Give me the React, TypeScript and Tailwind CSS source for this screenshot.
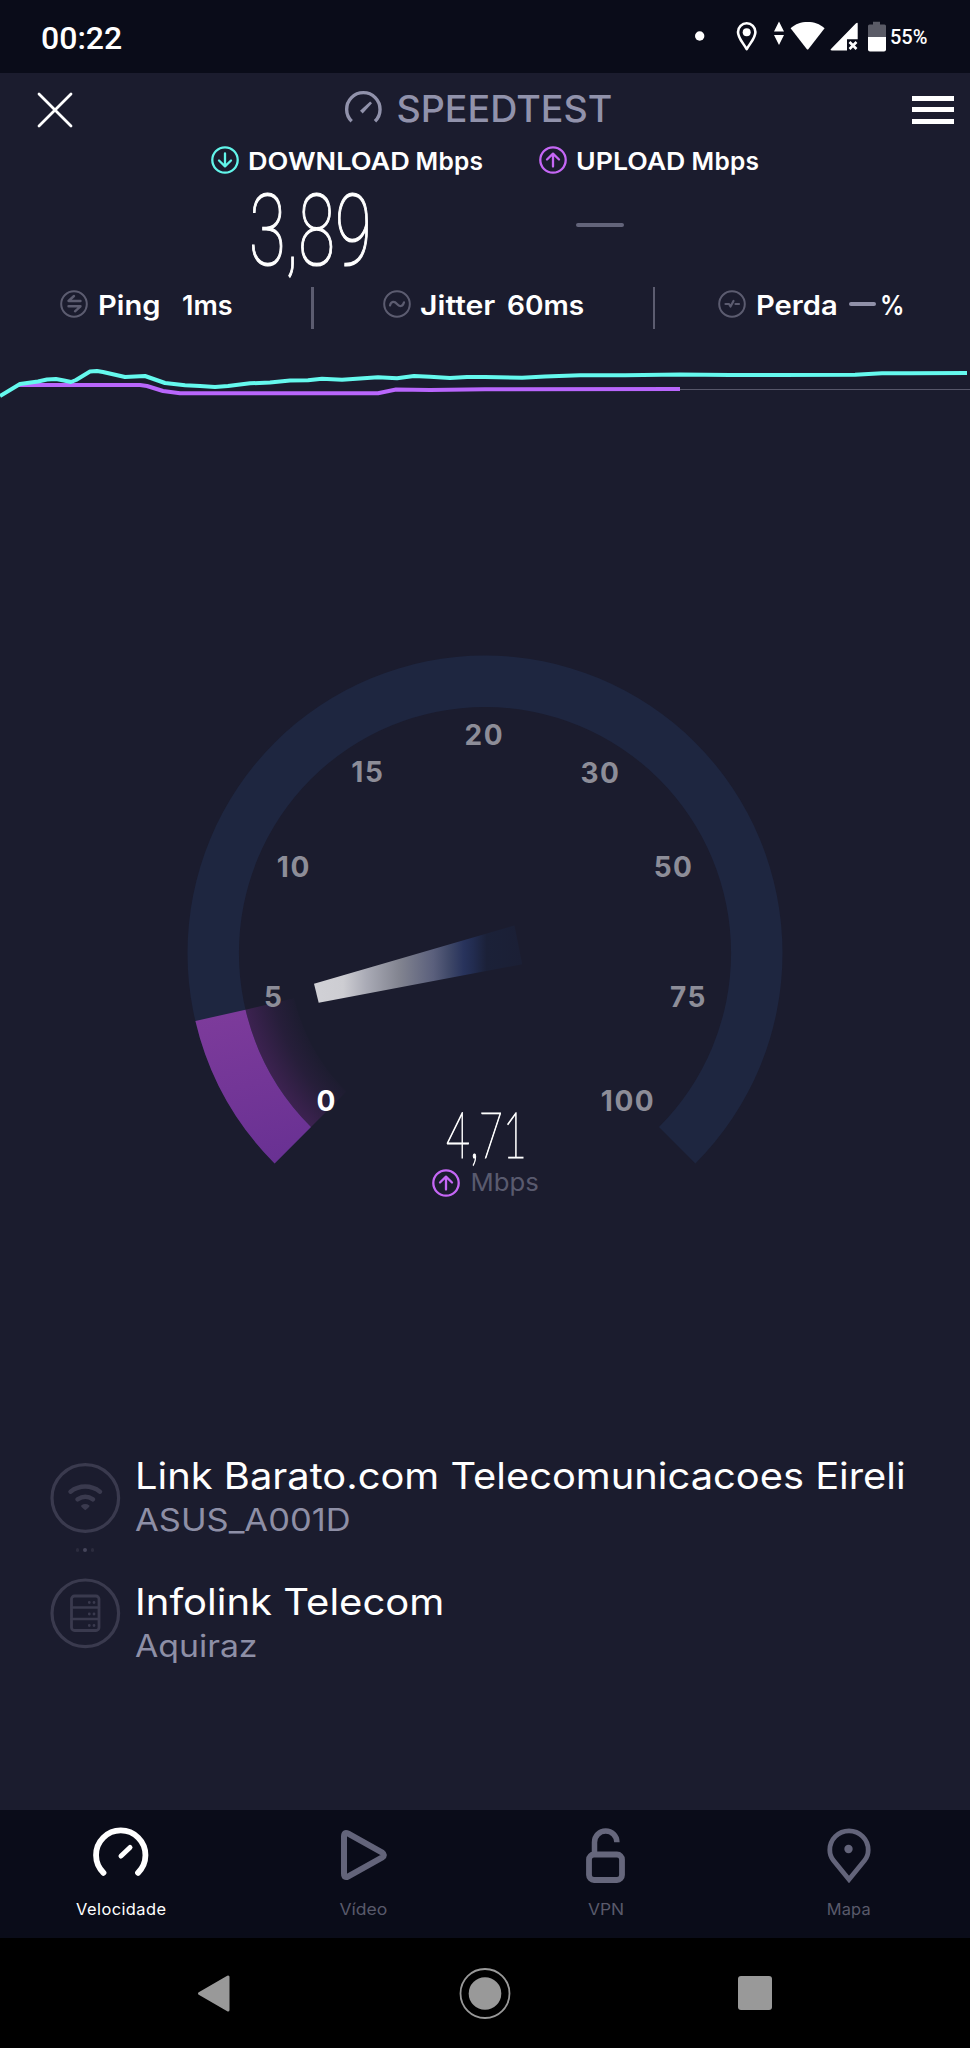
import { ReactNode } from "react";
import clsx from "clsx";

interface IconProps {
  box: string;
  className: string;
  children: ReactNode;
}

interface Tick {
  label: string;
  x: number;
  y: number;
  active?: boolean;
}

const ticks: Tick[] = [
  { label: "0", x: 326.6, y: 470.5, active: true },
  { label: "5", x: 273.6, y: 366.5 },
  { label: "10", x: 293.8, y: 237 },
  { label: "15", x: 367.8, y: 142 },
  { label: "20", x: 484.3, y: 105 },
  { label: "30", x: 600.4, y: 143 },
  { label: "50", x: 673.6, y: 237 },
  { label: "75", x: 688.4, y: 366.5 },
  { label: "100", x: 628, y: 470.5 },
];

const downloadLine =
  "0,56 20,44 38,41.5 47,39.5 56,39 64,40.5 71,42 76,40 90,31.5 97,31 103,32 125,37 145,36 165,43 185,45.3 200,46 215,47 228,46 250,43.3 270,42.5 290,40.5 308,40.3 322,38.7 342,39.8 378,37.3 397,38.3 414,36 430,36.8 450,38 467,37 485,37 522,37.8 545,36.5 580,35.3 625,35.3 680,34.5 730,35 780,35 855,34.7 882,33.3 910,33.3 967,33";
const uploadLine = "18,45 140,45 147,46 163,51 180,53.3 378,53.3 396,49.5 430,50 485,49.3 680,49";

function Icon({ box, className, children }: IconProps) {
  return (
    <svg
      viewBox={box}
      className={clsx("shrink-0 overflow-visible", className)}
      fill="none"
      stroke="currentColor"
      strokeLinecap="round"
      strokeLinejoin="round"
    >
      {children}
    </svg>
  );
}

function ArrowBadge({ up, className }: { up?: boolean; className: string }) {
  return (
    <Icon box="0 0 28 28" className={clsx("size-7", className)}>
      <circle cx="14" cy="14" r="12.700" strokeWidth="2.300" />
      <path d={up ? "M14 20.5V8M8 13.5 14 7.7l6 5.8" : "M14 7.5V20M8 14.5l6 5.8 6-5.8"} strokeWidth="2.300" />
    </Icon>
  );
}

function StatusBar() {
  return (
    <div className="flex h-[73px] items-start bg-[#0a0c19] pt-[21px] pl-[41px] font-['Roboto',sans-serif] font-medium">
      <span className="w-[654px] pt-[1px] text-[32px] leading-none">00:22</span>
      <Icon box="0 0 10 32" className="h-8 w-2.5">
        <circle cx="4.7" cy="15" r="4.7" fill="currentColor" stroke="none" />
      </Icon>
      <Icon box="0 0 22 32" className="ml-[31px] h-8 w-[22px]">
        <path d="M10.7 28.2C7 21.5 2 17.2 2 11a8.7 8.7 0 0 1 17.4 0c0 6.2-5 10.500-8.700 17.200Z" strokeWidth="2.6" />
        <circle cx="10.7" cy="11.2" r="4" fill="currentColor" stroke="none" />
      </Icon>
      <Icon box="0 0 10 32" className="ml-[16px] h-8 w-2.5">
        <path d="M5 .5 10 10.500H0ZM0 14h10L5 24Z" fill="currentColor" stroke="none" />
      </Icon>
      <Icon box="0 0 36 32" className="ml-[6px] h-8 w-9">
        <path d="M.6 7.300C5.500 2.800 11 1 17.600 1s12 1.800 17 6.300L18.500 28q-.9 1-1.800 0Z" fill="currentColor" stroke="none" />
      </Icon>
      <Icon box="0 0 28 32" className="ml-[4px] h-8 w-7">
        <path d="M27.700 2.500v15.800H17v11.200H2q-2.500 0-.8-1.700L25.500 2.800q2.200-1.800 2.200-.3Z" fill="currentColor" stroke="none" />
        <path d="m19.500 21 7 7m0-7-7 7" strokeWidth="2.6" strokeLinecap="butt" />
      </Icon>
      <Icon box="0 0 18 32" className="ml-[10px] h-8 w-[18px]">
        <path d="M1.500 3.500H5V.8h7v2.700h4.500Q18 3.500 18 5v11H0V5q0-1.500 1.500-1.500Z" fill="#5a5b66" stroke="none" />
        <path d="M0 16h18v12.500q0 2-2 2H2q-2 0-2-2Z" fill="currentColor" stroke="none" />
      </Icon>
      <span className="pt-[6px] pl-[4px] text-[20px] leading-none">55%</span>
    </div>
  );
}

function Header() {
  return (
    <header className="flex h-16 items-start pt-[18px] pl-[37px]">
      <Icon box="0 0 36 36" className="mt-[0.500px] h-9 w-9">
        <path d="m2 2 32 32M34 2 2 34" strokeWidth="2.8" />
      </Icon>
      <div className="ml-[272px] flex w-[567px] items-start text-[#9192ab]">
        <Icon box="0 0 37 37" className="size-[37px]">
          <path d="M6.700 30.300A16.700 16.700 0 1 1 30 30.300" strokeWidth="3.400" strokeLinecap="butt" />
          <path d="m15 19.700 10.200-9.200 1.800 1.800-9.300 10.200Z" fill="currentColor" stroke="none" />
        </Icon>
        <span className="origin-left scale-x-[1.030] pl-[14px] text-[36.500px] leading-[37px] font-medium">SPEEDTEST</span>
      </div>
      <div className="flex flex-col gap-[6.500px] pt-[4.500px]">
        <i className="h-[5px] w-[42px] bg-white" />
        <i className="h-[5px] w-[42px] bg-white" />
        <i className="h-[5px] w-[42px] bg-white" />
      </div>
    </header>
  );
}

function Results() {
  return (
    <div className="grid h-[143px] grid-cols-[328px_auto] pt-[9px] pl-[211px]">
      <div>
        <div className="flex h-7 items-center text-[24.500px] leading-[28px] font-semibold">
          <ArrowBadge className="text-[#62f5ea]" />
          <span className="ml-[9px] w-[167.500px] origin-left translate-y-[1px] scale-x-[1.106]">DOWNLOAD</span>
          <span className="translate-y-[1px] tracking-[0.300px]">Mbps</span>
        </div>
        <div className="mt-[7px] ml-[38px] origin-left scale-x-[0.670] font-['Roboto',sans-serif] text-[100px] leading-none font-thin whitespace-nowrap [-webkit-text-stroke:1.200px_white]">
          3,89
        </div>
      </div>
      <div>
        <div className="flex h-7 items-center text-[24.500px] leading-[28px] font-semibold">
          <ArrowBadge up className="text-[#c567f5]" />
          <span className="ml-[9px] w-[115.500px] origin-left translate-y-[1px] scale-x-[1.090]">UPLOAD</span>
          <span className="translate-y-[1px] tracking-[0.300px]">Mbps</span>
        </div>
        <div className="mt-[49px] ml-[37px] h-1 w-12 rounded-sm bg-[#63647a]" />
      </div>
    </div>
  );
}

function Stats() {
  return (
    <div className="flex h-[60px] items-start pt-[7px] pl-[60px] text-[26.500px] leading-[36px] font-semibold">
      <div className="flex w-[251px]">
        <Icon box="0 0 28 28" className="mt-[3px] size-7 text-[#5c5c70]">
          <circle cx="14" cy="14" r="12.800" strokeWidth="2" />
          <path d="m14 6-5.500 5h12M8.500 16.300h12L15 21.300" strokeWidth="2.400" />
        </Icon>
        <span className="ml-[9.500px] w-[84.500px] origin-left scale-x-[1.100]">Ping</span>
        <span className="origin-left scale-x-[1.020]">1ms</span>
      </div>
      <div className="h-[42px] w-[2.500px] bg-[#5c5c70]" />
      <div className="flex w-[339px] pl-[69px]">
        <Icon box="0 0 28 28" className="mt-[3px] size-7 text-[#5c5c70]">
          <circle cx="14" cy="14" r="12.800" strokeWidth="2" />
          <path d="M7 15.500c1.200-4.500 4.500-4.500 7-1.500s5.500 3 7-1.700" strokeWidth="2.200" />
        </Icon>
        <span className="ml-[9px] w-[87px] origin-left scale-x-[1.140]">Jitter</span>
        <span className="origin-left scale-x-[1.060]">60ms</span>
      </div>
      <div className="h-[42px] w-[2.500px] bg-[#5c5c70]" />
      <div className="flex pl-[63px]">
        <Icon box="0 0 28 28" className="mt-[3px] size-7 text-[#5c5c70]">
          <circle cx="14" cy="14" r="12.800" strokeWidth="2" />
          <path d="M7.500 14H11l1.500 2.500 3-5.500M17.500 14H21" strokeWidth="2.200" />
        </Icon>
        <span className="ml-[9.500px] w-[93.500px] origin-left scale-x-[1.100]">Perda</span>
        <i className="mt-[15px] h-1 w-[27px] rounded-sm bg-[#9090a8]" />
        <span className="ml-[4px] origin-left scale-x-[0.920]">%</span>
      </div>
    </div>
  );
}

function History() {
  return (
    <svg viewBox="0 0 970 70" className="block h-[70px] w-[970px]" fill="none" strokeLinejoin="round">
      <path d="M680 49.500H970" stroke="#565669" strokeWidth="1" />
      <polyline points={uploadLine} stroke="#b966fc" strokeWidth="4" />
      <polyline points={downloadLine} stroke="#65f9ee" strokeWidth="4" />
    </svg>
  );
}

function Dial() {
  return (
    <section className="mt-[230px] h-[817px]">
      <svg viewBox="0 0 970 540" className="block h-[540px] w-[970px]">
        <defs>
          <linearGradient id="fill" x1="220" y1="370" x2="260" y2="523" gradientUnits="userSpaceOnUse">
            <stop offset="0" stopColor="#7d3b9b" />
            <stop offset="1" stopColor="#693193" />
          </linearGradient>
          <radialGradient id="glow" cx="485" cy="313" r="246" gradientUnits="userSpaceOnUse">
            <stop offset="0.780" stopColor="#3c2250" stopOpacity="0" />
            <stop offset="0.880" stopColor="#3c2250" stopOpacity="0.350" />
            <stop offset="1" stopColor="#3c2250" />
          </radialGradient>
          <linearGradient id="needle" x1="314" y1="0" x2="522" y2="0" gradientUnits="userSpaceOnUse">
            <stop offset="0" stopColor="#d1d1d6" />
            <stop offset="0.140" stopColor="#cdcdd2" />
            <stop offset="0.250" stopColor="#aaabb6" />
            <stop offset="0.410" stopColor="#828490" />
            <stop offset="0.575" stopColor="#5a5f7c" />
            <stop offset="0.650" stopColor="#3f4868" />
            <stop offset="0.720" stopColor="#28335c" />
            <stop offset="0.765" stopColor="#222c50" />
            <stop offset="0.830" stopColor="#1b2138" />
            <stop offset="1" stopColor="#1b1f35" />
          </linearGradient>
        </defs>
        {/* track, filled part and the glow inside it */}
        <path d="M274.600 523.400A297.500 297.500 0 1 1 695.400 523.400L659 487A246 246 0 1 0 311 487Z" fill="#1e2640" />
        <path d="M311 487A246 246 0 0 1 245.500 369.700L294.200 358.200A196 196 0 0 0 346.400 451.600Z" fill="url(#glow)" />
        <path d="M274.600 523.400A297.500 297.500 0 0 1 195.400 381L245.500 369.700A246 246 0 0 0 311 487Z" fill="url(#fill)" />
        <path d="M314 343.700 514.500 285.400 522.200 324.300 318.700 362.700Z" fill="url(#needle)" />
        {ticks.map((tick) => (
          <text
            key={tick.label}
            x={tick.x}
            y={tick.y}
            textAnchor="middle"
            className={clsx("text-[28px] font-bold tracking-[1.500px]", tick.active ? "fill-white" : "fill-[#8d8d98]")}
          >
            {tick.label}
          </text>
        ))}
      </svg>
      <div className="-mt-[78px] pl-[446px]">
        <div className="w-[120px] origin-left scale-x-[0.647] font-['Lato',sans-serif] text-[64px] leading-none font-thin whitespace-nowrap [-webkit-text-stroke:1.200px_white]">
          4,71
        </div>
      </div>
      <div className="mt-[3px] flex items-center pl-[431.600px] text-[24.500px] leading-7 text-[#595a6e]">
        <ArrowBadge up className="text-[#c567f5]" />
        <span className="origin-left -translate-y-[1.500px] scale-x-[1.050] pl-[10px]">Mbps</span>
      </div>
    </section>
  );
}

function Providers() {
  return (
    <section className="flex h-[353px] pl-[50px]">
      <div className="flex w-[84.500px] flex-col pt-[6px] text-[#3a3a4e]">
        <Icon box="0 0 70 70" className="size-[70px]">
          <circle cx="35.300" cy="35" r="33.300" strokeWidth="3.200" />
          <path d="M20.500 28.700c9-6.800 20.500-6.800 29.500 0M27.500 36.300c5-3.300 10.700-3.300 15.500 0" strokeWidth="4.500" />
          <path d="M31.200 42.500q4-2.800 8.200 0 .8 1-4.100 4.800-5-3.800-4.100-4.800Z" fill="currentColor" stroke="none" />
        </Icon>
        <div className="flex h-[45px] items-start gap-1 pt-[15px] pl-[25.500px]">
          <i className="size-[3.500px] rounded-full bg-[#2b2b3d]" />
          <i className="size-[3.500px] rounded-full bg-[#45455a]" />
          <i className="size-[3.500px] rounded-full bg-[#2b2b3d]" />
        </div>
        <Icon box="0 0 70 70" className="size-[70px]">
          <circle cx="35.300" cy="35.300" r="33.300" strokeWidth="3.200" />
          <rect x="21.500" y="18" width="27.500" height="34.500" rx="3" strokeWidth="2.800" />
          <path d="M21.500 29.500H49M21.500 41H49" strokeWidth="2.400" />
          <path d="M39.300 24.500h.01M44 24.500h.01M39.300 36h.01M44 36h.01M39.300 47.500h.01M44 47.500h.01" strokeWidth="2.800" />
        </Icon>
      </div>
      <div className="flex flex-col items-start whitespace-nowrap">
        <p className="origin-left scale-x-[1.077] text-[37px] leading-[37px]">Link Barato.com Telecomunicacoes Eireli</p>
        <p className="mt-[10.500px] origin-left scale-x-[1.130] text-[30.500px] leading-[30.500px] text-[#8e8fa6]">ASUS_A001D</p>
        <p className="mt-12 origin-left scale-x-[1.082] text-[37px] leading-[37px]">Infolink Telecom</p>
        <p className="mt-[10.500px] origin-left scale-x-[1.108] text-[30.500px] leading-[30.500px] text-[#8e8fa6]">Aquiraz</p>
      </div>
    </section>
  );
}

function TabBar() {
  return (
    <nav className="grid h-32 grid-cols-4 bg-[#0a0c19] pt-4 text-[16.400px] leading-4 text-[#595a6b]">
      <div className="flex flex-col items-center gap-[17px] text-white">
        <Icon box="0 0 58 58" className="size-[58px]">
          <path d="M11.500 46.800A24.700 24.700 0 1 1 46 46.800" strokeWidth="5.800" />
          <path d="m29 30 9-8.500" strokeWidth="5" />
        </Icon>
        <span className="tracking-[0.430px]">Velocidade</span>
      </div>
      <div className="flex flex-col items-center gap-[17px]">
        <Icon box="0 0 58 58" className="size-[58px] text-[#63647a]">
          <path d="M9 10.500Q9 5.200 13.300 7.700L47.300 26.700Q50.500 29 47.300 31.300L13.300 50.300Q9 52.800 9 47.500Z" strokeWidth="6" />
        </Icon>
        <span className="scale-x-[1.070]">Vídeo</span>
      </div>
      <div className="flex flex-col items-center gap-[17px]">
        <Icon box="0 0 58 58" className="size-[58px] text-[#66677c]">
          <rect x="12" y="28.500" width="33" height="25.500" rx="5" strokeWidth="5.800" />
          <path d="M17.500 27V16.200a11.200 11.200 0 0 1 22.400 0" strokeWidth="5.500" strokeLinecap="butt" />
        </Icon>
        <span className="scale-x-[1.060]">VPN</span>
      </div>
      <div className="flex flex-col items-center gap-[17px]">
        <Icon box="0 0 58 58" className="size-[58px] text-[#63647a]">
          <path d="M29 53.500 13.500 34.500C11 31.500 9.800 28 9.800 24a19.200 19.200 0 0 1 38.400 0c0 4-1.200 7.500-3.700 10.500Z" strokeWidth="4.800" strokeLinejoin="miter" />
          <circle cx="28.500" cy="23" r="4.200" fill="currentColor" stroke="none" />
        </Icon>
        <span className="tracking-[0.200px]">Mapa</span>
      </div>
    </nav>
  );
}

function SystemNav() {
  return (
    <div className="flex h-[110px] items-center bg-black pl-[197px] text-[#999]">
      <Icon box="0 0 34 38" className="h-[38px] w-[34px]">
        <path d="M2.500 19.500 31 3v33Z" fill="currentColor" strokeWidth="3" />
      </Icon>
      <Icon box="0 0 52 52" className="ml-[228px] size-[52px]">
        <circle cx="26" cy="26.500" r="24.500" strokeWidth="1.800" />
        <circle cx="26" cy="26.500" r="16.300" fill="currentColor" stroke="none" />
      </Icon>
      <div className="ml-[227px] size-[34px] rounded-[3px] bg-[#999]" />
    </div>
  );
}

export default function App() {
  return (
    <div className="h-[2048px] w-[970px] overflow-hidden bg-[#1b1c2e] font-['Inter',sans-serif] text-white">
      <StatusBar />
      <Header />
      <Results />
      <Stats />
      <History />
      <Dial />
      <Providers />
      <TabBar />
      <SystemNav />
    </div>
  );
}
